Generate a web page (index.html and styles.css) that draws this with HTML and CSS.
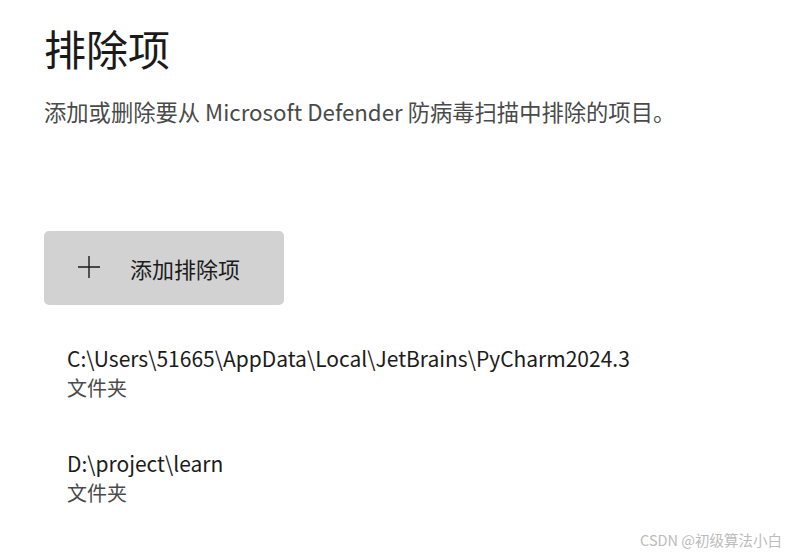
FILE: index.html
```html
<!DOCTYPE html>
<html lang="zh-CN">
<head>
<meta charset="utf-8">
<link rel="stylesheet" href="styles.css">
</head>
<body>
<main class="page">
  <h1 class="title">排除项</h1>
  <p class="desc">添加或删除要从 Microsoft Defender 防病毒扫描中排除的项目。</p>
  <button class="add-btn" type="button">
    <svg class="plus" width="24" height="24" viewBox="0 0 24 24" aria-hidden="true">
      <path d="M12 1v22M1 12h22" stroke="#1b1b1b" stroke-width="1.4" fill="none"/>
    </svg>
    <span class="add-label">添加排除项</span>
  </button>
  <ul class="list">
    <li class="item">
      <div class="item-path">C:\Users\51665\AppData\Local\JetBrains\PyCharm2024.3</div>
      <div class="item-type">文件夹</div>
    </li>
    <li class="item item-second">
      <div class="item-path">D:\project\learn</div>
      <div class="item-type">文件夹</div>
    </li>
  </ul>
  <div class="watermark">CSDN @初级算法小白</div>
</main>
</body>
</html>
```
FILE: styles.css
```css
html, body {
  margin: 0;
  padding: 0;
  background: #ffffff;
}
body {
  font-family: "Noto Sans CJK SC", "Noto Sans", sans-serif;
  color: #1b1b1b;
  width: 789px;
  height: 555px;
  overflow: hidden;
}
.page {
  position: relative;
  height: 555px;
  padding: 0 0 0 44px;
  box-sizing: border-box;
}
.title {
  margin: 0;
  padding-top: 18px;
  font-size: 42px;
  font-weight: 400;
  line-height: 60px;
  color: #1a1a1a;
}
.desc {
  margin: 17px 0 0;
  font-size: 22.3px;
  line-height: 32px;
  color: #4a4a4a;
}
.add-btn {
  margin-top: 104px;
  width: 240px;
  height: 74px;
  border: none;
  border-radius: 5px;
  background: #d2d2d2;
  display: flex;
  align-items: center;
  padding: 0 0 0 33px;
  font-family: inherit;
  color: #1b1b1b;
}
.plus {
  flex: none;
  margin-top: -3px;
}
.add-label {
  margin-left: 29px;
  font-size: 22px;
  line-height: 32px;
}
.list {
  list-style: none;
  margin: 38px 0 0;
  padding: 0 0 0 23px;
}
.item-path {
  font-size: 21px;
  line-height: normal;
  color: #1b1b1b;
}
.item-type {
  font-size: 20px;
  line-height: normal;
  color: #4a4a4a;
}
.item-second {
  margin-top: 46px;
}
.watermark {
  position: absolute;
  right: 7px;
  bottom: 5px;
  font-size: 14.5px;
  color: #bcbcbc;
}
```
